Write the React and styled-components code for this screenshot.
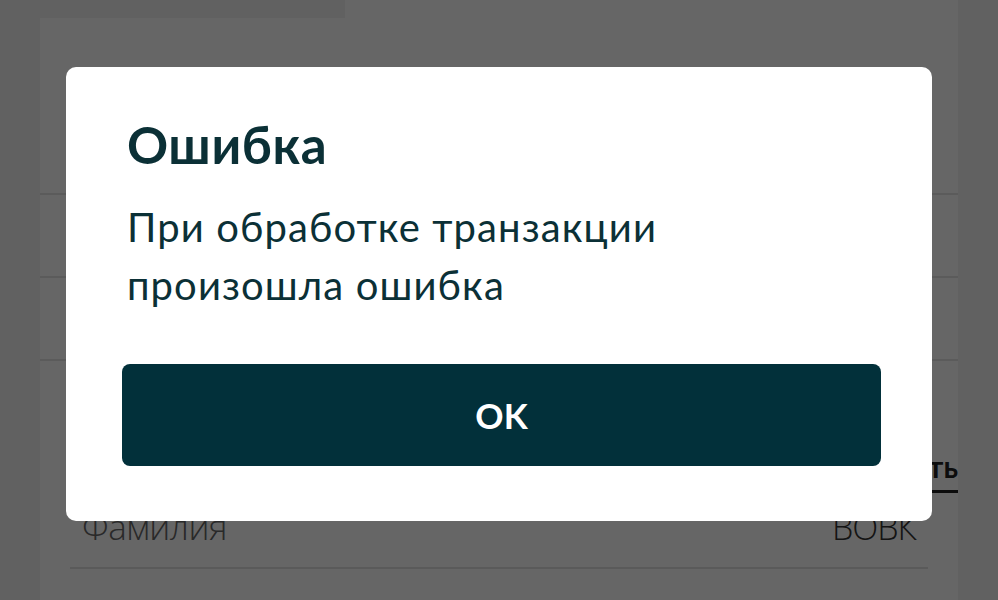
import styled, { createGlobalStyle } from "styled-components";

const GlobalStyle = createGlobalStyle`
  html, body {
    margin: 0;
    padding: 0;
    height: 100%;
    background: #f3f3f3;
    font-family: Lato, "Open Sans", sans-serif;
  }
  #root {
    height: 100%;
  }
`;

const Page = styled.div`
  height: 600px;
  margin: 0 40px;
  background: #ffffff;
  overflow: hidden;
`;

const TopBlock = styled.div`
  width: 305px;
  height: 18px;
  background: #f3f3f3;
`;

const Header = styled.div`
  height: 175px;
  border-bottom: 2px solid #e4e4e4;
`;

const Row = styled.div`
  height: 81px;
  border-bottom: 2px solid #e4e4e4;
`;

const SectionHead = styled.div`
  display: flex;
  justify-content: flex-end;
  height: 132px;
  align-items: flex-end;
`;

const EditLink = styled.a`
  font-family: Lato, sans-serif;
  font-weight: 700;
  font-size: 30px;
  color: #222;
  text-decoration: none;
  border-bottom: 3px solid #222;
  padding-bottom: 9px;
  line-height: 1;
`;

const Field = styled.div`
  display: flex;
  justify-content: space-between;
  align-items: baseline;
  margin: 0 30px;
  padding: 10px 12px 17px 12px;
  border-bottom: 2px solid #e2e2e2;
`;

const Label = styled.span`
  font-family: "Open Sans", sans-serif;
  font-weight: 300;
  font-size: 35px;
  letter-spacing: -0.5px;
  color: #666;
`;

const Value = styled.span`
  font-family: "Open Sans", sans-serif;
  font-weight: 300;
  font-size: 34px;
  letter-spacing: -1px;
  color: #333;
`;

const Overlay = styled.div`
  position: fixed;
  inset: 0;
  background: rgba(0, 0, 0, 0.6);
  display: flex;
  align-items: center;
  justify-content: center;
  padding-bottom: 12px;
  box-sizing: border-box;
`;

const Dialog = styled.div`
  width: 866px;
  box-sizing: border-box;
  background: #ffffff;
  border-radius: 10px;
  padding: 48px 51px 55px 56px;
`;

const Title = styled.h2`
  margin: 0 0 0 5px;
  font-family: Lato, sans-serif;
  font-weight: 700;
  font-size: 51px;
  line-height: 60px;
  letter-spacing: 0.6px;
  color: #0b3036;
`;

const Message = styled.p`
  margin: 23px 0 0 5px;
  font-family: Lato, sans-serif;
  font-weight: 400;
  font-size: 40px;
  line-height: 58px;
  letter-spacing: 1.1px;
  color: #0b3036;
  max-width: 600px;
`;

const OkButton = styled.button`
  display: block;
  width: 100%;
  height: 102px;
  margin-top: 50px;
  border: none;
  border-radius: 8px;
  background: #02303a;
  color: #ffffff;
  font-family: Lato, sans-serif;
  font-weight: 700;
  font-size: 35px;
  cursor: pointer;
`;

export default function App() {
  return (
    <>
      <GlobalStyle />
      <Page>
        <TopBlock />
        <Header />
        <Row />
        <Row />
        <SectionHead>
          <EditLink href="#">Изменить</EditLink>
        </SectionHead>
        <Field>
          <Label>Фамилия</Label>
          <Value>ВОВК</Value>
        </Field>
      </Page>
      <Overlay>
        <Dialog>
          <Title>Ошибка</Title>
          <Message>При обработке транзакции произошла ошибка</Message>
          <OkButton>OK</OkButton>
        </Dialog>
      </Overlay>
    </>
  );
}
